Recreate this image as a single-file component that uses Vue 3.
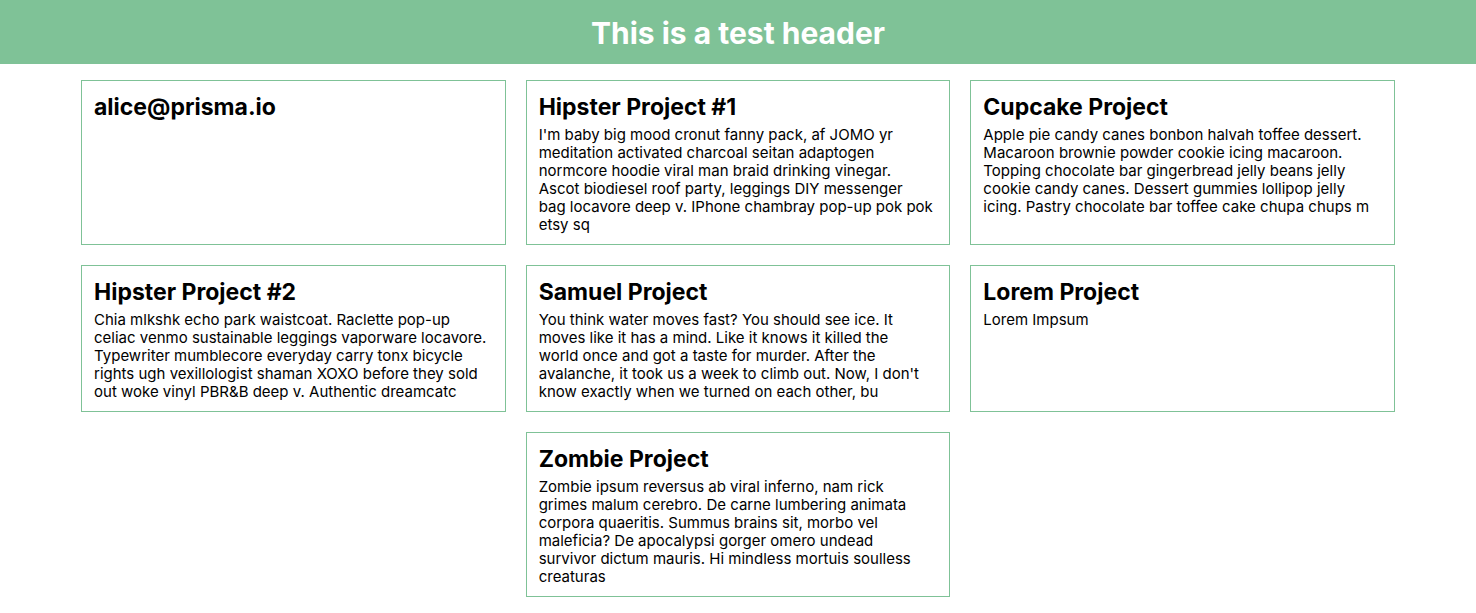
<script setup>
const projects = [
  { title: 'alice@prisma.io', text: '' },
  {
    title: 'Hipster Project #1',
    text: `I'm baby big mood cronut fanny pack, af JOMO yr
meditation activated charcoal seitan adaptogen
normcore hoodie viral man braid drinking vinegar.
Ascot biodiesel roof party, leggings DIY messenger
bag locavore deep v. IPhone chambray pop-up pok pok
etsy sq`
  },
  {
    title: 'Cupcake Project',
    text: `Apple pie candy canes bonbon halvah toffee dessert.
Macaroon brownie powder cookie icing macaroon.
Topping chocolate bar gingerbread jelly beans jelly
cookie candy canes. Dessert gummies lollipop jelly
icing. Pastry chocolate bar toffee cake chupa chups m`
  },
  {
    title: 'Hipster Project #2',
    text: `Chia mlkshk echo park waistcoat. Raclette pop-up
celiac venmo sustainable leggings vaporware locavore.
Typewriter mumblecore everyday carry tonx bicycle
rights ugh vexillologist shaman XOXO before they sold
out woke vinyl PBR&B deep v. Authentic dreamcatc`
  },
  {
    title: 'Samuel Project',
    text: `You think water moves fast? You should see ice. It
moves like it has a mind. Like it knows it killed the
world once and got a taste for murder. After the
avalanche, it took us a week to climb out. Now, I don't
know exactly when we turned on each other, bu`
  },
  { title: 'Lorem Project', text: 'Lorem Impsum' },
  {
    title: 'Zombie Project',
    text: `Zombie ipsum reversus ab viral inferno, nam rick
grimes malum cerebro. De carne lumbering animata
corpora quaeritis. Summus brains sit, morbo vel
maleficia? De apocalypsi gorger omero undead
survivor dictum mauris. Hi mindless mortuis soulless
creaturas`
  }
]
</script>

<template>
  <div class="page">
    <header class="header">
      <h1>This is a test header</h1>
    </header>
    <main class="projects">
      <article v-for="project in projects" :key="project.title" class="card">
        <h2>{{ project.title }}</h2>
        <p v-if="project.text">{{ project.text }}</p>
      </article>
    </main>
  </div>
</template>

<style>
body {
  margin: 0;
  background: #fff;
}
</style>

<style scoped>
.page {
  font-family: Inter, "Liberation Sans", sans-serif;
  color: #000;
}
.header {
  background: #7fc297;
  color: #fff;
  text-align: center;
  padding: 13px 16px 11px;
}
h1 {
  margin: 0;
  font-size: 30px;
  line-height: 40px;
  font-weight: 700;
}
.projects {
  display: flex;
  flex-wrap: wrap;
  justify-content: center;
  gap: 20px;
  padding: 16px 81px;
}
.card {
  box-sizing: border-box;
  flex: 0 0 calc((100% - 40px) / 3);
  border: 1px solid #7fc297;
  padding: 12px 11px 10px 12px;
}
h2 {
  margin: 0 0 5px;
  font-size: 23px;
  line-height: 28px;
  font-weight: 700;
}
p {
  margin: 0;
  font-size: 15px;
  line-height: 18px;
  white-space: pre-line;
}
</style>
